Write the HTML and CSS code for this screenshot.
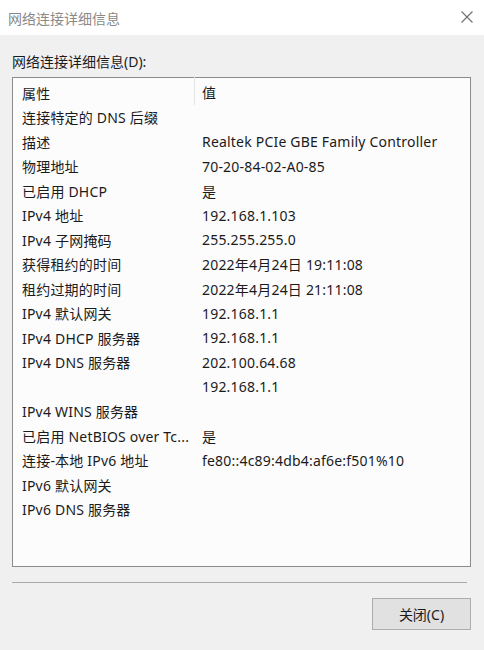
FILE: index.html
```html
<!DOCTYPE html>
<html>
<head>
    <meta charset="UTF-8">
    <title>网络连接详细信息</title>
    <link rel="stylesheet" href="styles.css">
</head>
<body>
<div class="titlebar">
    <span class="title">网络连接详细信息</span>
    <svg class="close-x" width="12" height="12" viewBox="0 0 12 12">
        <path d="M0.5 0.5 L11.5 11.5 M11.5 0.5 L0.5 11.5" stroke="#6e6e6e" stroke-width="1.1" fill="none"/>
    </svg>
</div>
<div class="content">
    <div class="label">网络连接详细信息(D):</div>
    <div class="listbox">
        <div class="row head">
            <span class="col-name">属性</span>
            <span class="col-value">值</span>
        </div>
        <div class="row"><span class="col-name">连接特定的 DNS 后缀</span><span class="col-value"></span></div>
        <div class="row"><span class="col-name">描述</span><span class="col-value">Realtek PCIe GBE Family Controller</span></div>
        <div class="row"><span class="col-name">物理地址</span><span class="col-value">70-20-84-02-A0-85</span></div>
        <div class="row"><span class="col-name">已启用 DHCP</span><span class="col-value">是</span></div>
        <div class="row"><span class="col-name">IPv4 地址</span><span class="col-value">192.168.1.103</span></div>
        <div class="row"><span class="col-name">IPv4 子网掩码</span><span class="col-value">255.255.255.0</span></div>
        <div class="row"><span class="col-name">获得租约的时间</span><span class="col-value">2022年4月24日 19:11:08</span></div>
        <div class="row"><span class="col-name">租约过期的时间</span><span class="col-value">2022年4月24日 21:11:08</span></div>
        <div class="row"><span class="col-name">IPv4 默认网关</span><span class="col-value">192.168.1.1</span></div>
        <div class="row"><span class="col-name">IPv4 DHCP 服务器</span><span class="col-value">192.168.1.1</span></div>
        <div class="row"><span class="col-name">IPv4 DNS 服务器</span><span class="col-value">202.100.64.68</span></div>
        <div class="row"><span class="col-name"></span><span class="col-value">192.168.1.1</span></div>
        <div class="row"><span class="col-name">IPv4 WINS 服务器</span><span class="col-value"></span></div>
        <div class="row"><span class="col-name">已启用 NetBIOS over Tc...</span><span class="col-value">是</span></div>
        <div class="row"><span class="col-name">连接-本地 IPv6 地址</span><span class="col-value">fe80::4c89:4db4:af6e:f501%10</span></div>
        <div class="row"><span class="col-name">IPv6 默认网关</span><span class="col-value"></span></div>
        <div class="row"><span class="col-name">IPv6 DNS 服务器</span><span class="col-value"></span></div>
    </div>
    <div class="divider"></div>
    <div class="buttons">
        <button class="btn">关闭(C)</button>
    </div>
</div>
</body>
</html>
```

FILE: styles.css
```css
body {
    margin: 0;
    background-color: #f0f0f0;
    color: #1b1b1b;
    font-family: "Noto Sans", "Noto Sans CJK SC", sans-serif;
    font-size: 14px;
}
.titlebar {
    height: 35px;
    background-color: #fff;
    display: flex;
    align-items: center;
    justify-content: space-between;
    padding: 0 11px 0 8px;
}
.title {
    color: #8a8a8a;
    font-size: 14px;
}
.close-x {
    margin-top: -2px;
}
.content {
    padding: 0 13px 0 12px;
}
.label {
    margin-top: 17px;
    line-height: 20px;
    height: 20px;
}
.listbox {
    margin-top: 5px;
    height: 486px;
    background-color: #fcfcfd;
    border: 1px solid #8c8c8c;
    padding-top: 2px;
    letter-spacing: 0.2px;
}
.row {
    display: flex;
    height: 24.5px;
    align-items: center;
    white-space: nowrap;
}
.row.head {
    height: 25px;
}
.col-name {
    width: 172px;
    flex: none;
    padding-left: 9px;
    overflow: hidden;
}
.col-value {
    padding-left: 8px;
}
.head .col-value {
    border-left: 1px solid #e5e5e5;
    height: 25px;
    line-height: 25px;
    padding-left: 7px;
    margin-top: -5px;
    padding-top: 5px;
}
.divider {
    margin-top: 15px;
    height: 1px;
    background-color: #a9a9a9;
    margin-right: 4px;
}
.buttons {
    display: flex;
    justify-content: flex-end;
    margin-top: 15px;
}
.btn {
    width: 99px;
    height: 32px;
    background-color: #e1e1e1;
    border: 1px solid #adadad;
    font-family: "Noto Sans", "Noto Sans CJK SC", sans-serif;
    font-size: 14px;
    color: #1b1b1b;
    padding: 0;
}
```
